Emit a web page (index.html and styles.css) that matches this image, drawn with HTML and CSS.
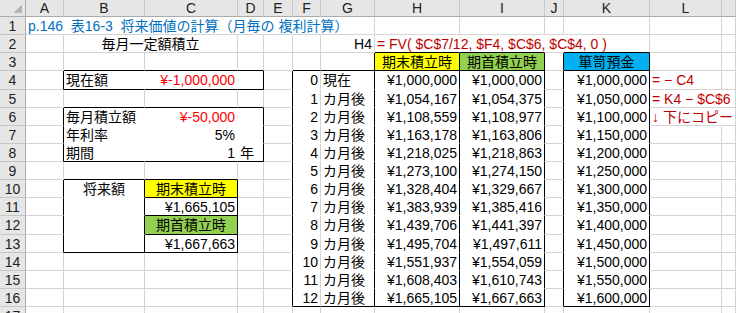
FILE: index.html
```html
<!DOCTYPE html>
<html lang="ja">
<head>
<meta charset="utf-8">
<title>将来価値の計算</title>
<link rel="stylesheet" href="styles.css">
</head>
<body>
<div class="sheet">
<!-- header -->
<div class="corner"></div><div class="h">A</div><div class="h">B</div><div class="h">C</div><div class="h">D</div><div class="h">E</div><div class="h">F</div><div class="h">G</div><div class="h">H</div><div class="h">I</div><div class="h">J</div><div class="h">K</div><div class="h">L</div><div class="h"></div>
<!-- 1 -->
<div class="rh">1</div><div class="c nr blue">p.146&nbsp; 表16-3&nbsp; 将来価値の計算（月毎の 複利計算）</div><div class="c nr"></div><div class="c nr"></div><div class="c nr"></div><div class="c nr"></div><div class="c nr"></div><div class="c"></div><div class="c"></div><div class="c"></div><div class="c"></div><div class="c"></div><div class="c"></div><div class="c"></div>
<!-- 2 -->
<div class="rh">2</div><div class="c"></div><div class="c ct span2">毎月一定額積立</div><div class="c"></div><div class="c"></div><div class="c"></div><div class="c r">H4</div><div class="c nr kb dred">= FV( $C$7/12, $F4, $C$6, $C$4, 0 )</div><div class="c nr kb"></div><div class="c nr"></div><div class="c kb"></div><div class="c"></div><div class="c"></div>
<!-- 3 -->
<div class="rh">3</div><div class="c"></div><div class="c kb"></div><div class="c kb"></div><div class="c kb"></div><div class="c"></div><div class="c kb"></div><div class="c kb kr"></div><div class="c kb kr yel ct">期末積立時</div><div class="c kb kr grn ct">期首積立時</div><div class="c kr"></div><div class="c kb kr cya ct">箪笥預金</div><div class="c"></div><div class="c"></div>
<!-- 4 -->
<div class="rh">4</div><div class="c kr"></div><div class="c nr kb">現在額</div><div class="c nr kb r red">¥-1,000,000</div><div class="c kr kb"></div><div class="c kr"></div><div class="c nb r">0</div><div class="c nb kr">現在</div><div class="c nb kr r">¥1,000,000</div><div class="c nb kr r">¥1,000,000</div><div class="c kr"></div><div class="c nb kr r">¥1,000,000</div><div class="c dred">= − C4</div><div class="c"></div>
<!-- 5 -->
<div class="rh">5</div><div class="c"></div><div class="c kb"></div><div class="c kb"></div><div class="c kb"></div><div class="c kr"></div><div class="c nb r">1</div><div class="c nb kr">カ月後</div><div class="c nb kr r">¥1,054,167</div><div class="c nb kr r">¥1,054,375</div><div class="c kr"></div><div class="c nb kr r">¥1,050,000</div><div class="c nr dred">= K4 − $C$6</div><div class="c"></div>
<!-- 6 -->
<div class="rh">6</div><div class="c kr"></div><div class="c nr nb">毎月積立額</div><div class="c nr nb r red">¥-50,000</div><div class="c nb kr"></div><div class="c kr"></div><div class="c nb r">2</div><div class="c nb kr">カ月後</div><div class="c nb kr r">¥1,108,559</div><div class="c nb kr r">¥1,108,977</div><div class="c kr"></div><div class="c nb kr r">¥1,100,000</div><div class="c nr dred">↓ 下にコピー</div><div class="c"></div>
<!-- 7 -->
<div class="rh">7</div><div class="c kr"></div><div class="c nr nb">年利率</div><div class="c nr nb r">5%</div><div class="c nb kr"></div><div class="c kr"></div><div class="c nb r">3</div><div class="c nb kr">カ月後</div><div class="c nb kr r">¥1,163,178</div><div class="c nb kr r">¥1,163,806</div><div class="c kr"></div><div class="c nb kr r">¥1,150,000</div><div class="c"></div><div class="c"></div>
<!-- 8 -->
<div class="rh">8</div><div class="c kr"></div><div class="c nr kb">期間</div><div class="c nr kb r">1</div><div class="c kr kb">年</div><div class="c kr"></div><div class="c nb r">4</div><div class="c nb kr">カ月後</div><div class="c nb kr r">¥1,218,025</div><div class="c nb kr r">¥1,218,863</div><div class="c kr"></div><div class="c nb kr r">¥1,200,000</div><div class="c"></div><div class="c"></div>
<!-- 9 -->
<div class="rh">9</div><div class="c"></div><div class="c kb"></div><div class="c kb"></div><div class="c"></div><div class="c kr"></div><div class="c nb r">5</div><div class="c nb kr">カ月後</div><div class="c nb kr r">¥1,273,100</div><div class="c nb kr r">¥1,274,150</div><div class="c kr"></div><div class="c nb kr r">¥1,250,000</div><div class="c"></div><div class="c"></div>
<!-- 10 -->
<div class="rh">10</div><div class="c kr"></div><div class="c nb kr ct">将来額</div><div class="c kb kr yel ct">期末積立時</div><div class="c"></div><div class="c kr"></div><div class="c nb r">6</div><div class="c nb kr">カ月後</div><div class="c nb kr r">¥1,328,404</div><div class="c nb kr r">¥1,329,667</div><div class="c kr"></div><div class="c nb kr r">¥1,300,000</div><div class="c"></div><div class="c"></div>
<!-- 11 -->
<div class="rh">11</div><div class="c kr"></div><div class="c nb kr"></div><div class="c kb kr r">¥1,665,105</div><div class="c"></div><div class="c kr"></div><div class="c nb r">7</div><div class="c nb kr">カ月後</div><div class="c nb kr r">¥1,383,939</div><div class="c nb kr r">¥1,385,416</div><div class="c kr"></div><div class="c nb kr r">¥1,350,000</div><div class="c"></div><div class="c"></div>
<!-- 12 -->
<div class="rh">12</div><div class="c kr"></div><div class="c nb kr"></div><div class="c kb kr grn ct">期首積立時</div><div class="c"></div><div class="c kr"></div><div class="c nb r">8</div><div class="c nb kr">カ月後</div><div class="c nb kr r">¥1,439,706</div><div class="c nb kr r">¥1,441,397</div><div class="c kr"></div><div class="c nb kr r">¥1,400,000</div><div class="c"></div><div class="c"></div>
<!-- 13 -->
<div class="rh">13</div><div class="c kr"></div><div class="c kb kr"></div><div class="c kb kr r">¥1,667,663</div><div class="c"></div><div class="c kr"></div><div class="c nb r">9</div><div class="c nb kr">カ月後</div><div class="c nb kr r">¥1,495,704</div><div class="c nb kr r">¥1,497,611</div><div class="c kr"></div><div class="c nb kr r">¥1,450,000</div><div class="c"></div><div class="c"></div>
<!-- 14 -->
<div class="rh">14</div><div class="c"></div><div class="c"></div><div class="c"></div><div class="c"></div><div class="c kr"></div><div class="c nb r">10</div><div class="c nb kr">カ月後</div><div class="c nb kr r">¥1,551,937</div><div class="c nb kr r">¥1,554,059</div><div class="c kr"></div><div class="c nb kr r">¥1,500,000</div><div class="c"></div><div class="c"></div>
<!-- 15 -->
<div class="rh">15</div><div class="c"></div><div class="c"></div><div class="c"></div><div class="c"></div><div class="c kr"></div><div class="c nb r">11</div><div class="c nb kr">カ月後</div><div class="c nb kr r">¥1,608,403</div><div class="c nb kr r">¥1,610,743</div><div class="c kr"></div><div class="c nb kr r">¥1,550,000</div><div class="c"></div><div class="c"></div>
<!-- 16 -->
<div class="rh">16</div><div class="c"></div><div class="c"></div><div class="c"></div><div class="c"></div><div class="c kr"></div><div class="c kb r">12</div><div class="c kb kr">カ月後</div><div class="c kb kr r">¥1,665,105</div><div class="c kb kr r">¥1,667,663</div><div class="c kr"></div><div class="c kb kr r">¥1,600,000</div><div class="c"></div><div class="c"></div>
<!-- 17 -->
<div class="rh">17</div><div class="c"></div><div class="c"></div><div class="c"></div><div class="c"></div><div class="c"></div><div class="c"></div><div class="c"></div><div class="c"></div><div class="c"></div><div class="c"></div><div class="c"></div><div class="c"></div><div class="c"></div>
</div>
</body>
</html>
```

FILE: styles.css
```css
html, body {
  margin: 0;
  padding: 0;
  background: #ffffff;
  overflow: hidden;
  height: 313px;
}

body {
  font-family: "Liberation Sans", "Noto Sans CJK JP", sans-serif;
  font-size: 14px;
  color: #000000;
}

.sheet {
  display: grid;
  grid-template-columns: 26px 38px 81px 93px 26px 29px 28px 54px 85px 85px 19px 86px 72px 14px;
  grid-template-rows: 17px repeat(17, 18.125px);
  width: 736px;
}

.corner {
  box-sizing: border-box;
  background-color: #e6e6e6;
  border-right: 1px solid #ababab;
  border-bottom: 1px solid #ababab;
  background-image: linear-gradient(135deg, transparent 50%, #b4b4b4 50%);
  background-size: 9px 9px;
  background-position: right 3px bottom 3px;
  background-repeat: no-repeat;
}

.h {
  box-sizing: border-box;
  background: #e6e6e6;
  border-right: 1px solid #c6c6c6;
  border-bottom: 1px solid #ababab;
  text-align: center;
  line-height: 16px;
  color: #222222;
}

.rh {
  box-sizing: border-box;
  background: #e6e6e6;
  border-right: 1px solid #ababab;
  border-bottom: 1px solid #c6c6c6;
  text-align: center;
  line-height: 17px;
  padding-top: 1px;
  color: #222222;
}

.c {
  box-sizing: border-box;
  border-right: 1px solid #d4d4d4;
  border-bottom: 1px solid #d4d4d4;
  white-space: nowrap;
  padding: 1px 2px 0 2px;
  line-height: 17px;
}

.span2 { grid-column: span 2; }

.nr { border-right-color: transparent; }
.nb { border-bottom-color: transparent; }
.kr { border-right-color: #000000; }
.kb { border-bottom-color: #000000; }

.r { text-align: right; }
.ct { text-align: center; }

.blue { color: #0070c0; }
.red { color: #ff0000; }
.dred { color: #c00000; }

.yel { background: #ffff00; }
.grn { background: #92d050; }
.cya { background: #00b0f0; }
```
